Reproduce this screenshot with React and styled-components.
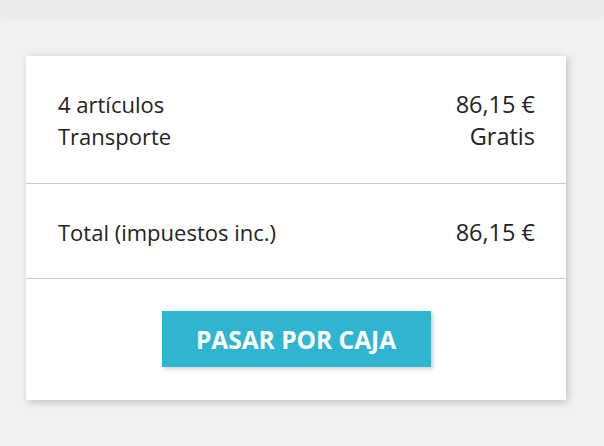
import React from "react";
import styled, { createGlobalStyle } from "styled-components";

const GlobalStyle = createGlobalStyle`
	html, body {
		margin: 0;
		padding: 0;
		background: #f1f1f1;
		font-family: "Open Sans", "Noto Sans", sans-serif;
		color: #232323;
	}
`;

const lines = [
	{ label: "4 artículos", value: "86,15 €" },
	{ label: "Transporte", value: "Gratis" },
];

export default function App() {
	return (
		<>
			<GlobalStyle />
			<TopBand />
			<Page>
				<Card>
					<Section $bottom={31}>
						{lines.map((line) => (
							<Row key={line.label}>
								<Label>{line.label}</Label>
								<Value>{line.value}</Value>
							</Row>
						))}
					</Section>
					<Divider />
					<Section $bottom={30}>
						<Row>
							<Label>Total (impuestos inc.)</Label>
							<Value>86,15 €</Value>
						</Row>
					</Section>
					<Divider />
					<Actions>
						<CheckoutButton>Pasar por caja</CheckoutButton>
					</Actions>
				</Card>
			</Page>
		</>
	);
}

const TopBand = styled.div`
	height: 16px;
	background: #e9e9e9;
	box-shadow: 0 2px 4px rgba(0, 0, 0, 0.04);
`;

const Page = styled.div`
	padding: 40px 38px 40px 26px;
`;

const Card = styled.div`
	width: 540px;
	background: #fff;
	box-shadow: 2px 2px 8px 0 rgba(0, 0, 0, 0.2);
`;

const Section = styled.div`
	padding: 32px 31px ${(p) => p.$bottom}px 32px;
`;

const Row = styled.div`
	display: flex;
	justify-content: space-between;
	align-items: center;
	height: 32px;
`;

const Label = styled.span`
	font-size: 22px;
	line-height: 32px;
`;

const Value = styled.span`
	font-size: 23.5px;
	line-height: 32px;
	text-align: right;
`;

const Divider = styled.hr`
	margin: 0;
	border: 0;
	border-top: 1px solid #c8c8c8;
`;

const Actions = styled.div`
	display: flex;
	justify-content: center;
	padding: 32px 32px 33px;
`;

const CheckoutButton = styled.button`
	width: 269px;
	height: 56px;
	padding: 0;
	border: 0;
	background: #2fb5d2;
	color: #fff;
	font-family: "Open Sans", "Noto Sans", sans-serif;
	font-size: 24.5px;
	font-weight: 700;
	text-transform: uppercase;
	box-shadow: 2px 2px 4px 0 rgba(0, 0, 0, 0.2);
	cursor: pointer;
`;
